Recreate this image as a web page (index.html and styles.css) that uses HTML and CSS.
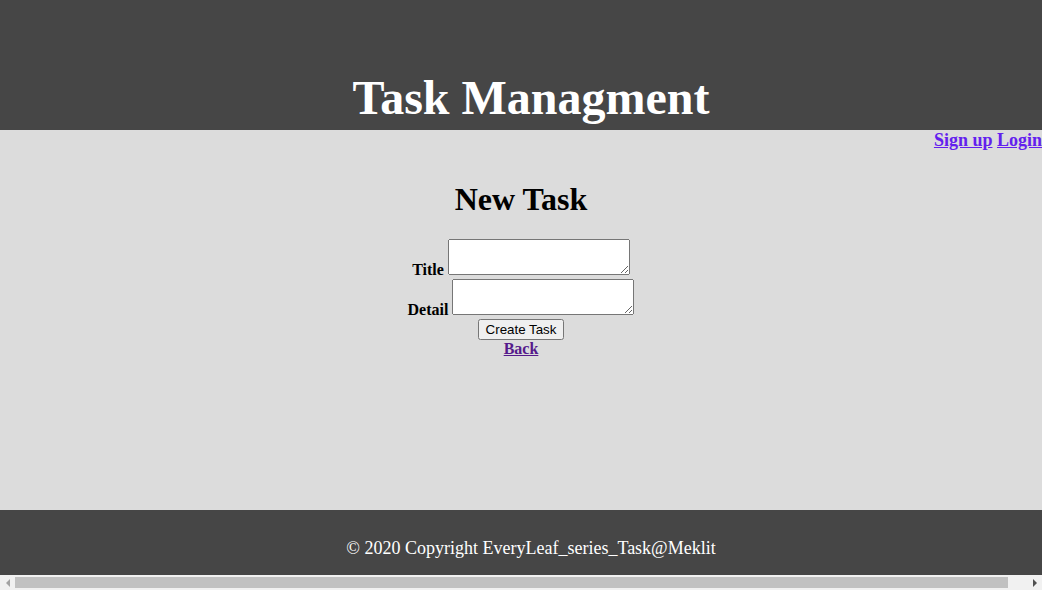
FILE: index.html
```html
<!DOCTYPE html>
<html lang="en">
<head>
<meta charset="utf-8">
<title>Task Managment</title>
<link rel="stylesheet" href="styles.css">
</head>
<body>
<header class="site-header">
  <h1 class="site-title">Task Managment</h1>
</header>
<main class="content">
  <nav class="auth-links"><a href="#" class="auth-link">Sign up</a> <a href="#" class="auth-link">Login</a></nav>
  <h2 class="page-title">New Task</h2>
  <form class="task-form">
    <div class="field"><label class="field-label">Title</label> <textarea class="field-input"></textarea></div>
    <div class="field"><label class="field-label">Detail</label> <textarea class="field-input"></textarea></div>
    <div class="actions"><input type="submit" value="Create Task" class="submit-btn"></div>
  </form>
  <a href="#" class="back-link">Back</a>
</main>
<footer class="site-footer">
  <p class="copyright">© 2020 Copyright EveryLeaf_series_Task@Meklit</p>
</footer>
<div class="hscroll" aria-hidden="true">
  <span class="hscroll-btn"><span class="arrow arrow-left"></span></span>
  <span class="hscroll-track"><span class="hscroll-thumb"></span></span>
  <span class="hscroll-btn"><span class="arrow arrow-right"></span></span>
</div>
</body>
</html>
```

FILE: styles.css
```css
html, body {
  margin: 0;
  padding: 0;
}
body {
  font-family: "Liberation Serif", "Times New Roman", serif;
  font-size: 16px;
  background: #dcdcdc;
}
.site-header {
  width: 100%;
  height: 60px;
  padding: 70px 10px 0;
  background: #464646;
  text-align: center;
}
.site-title {
  margin: 0;
  font-size: 48px;
  font-weight: bold;
  color: #ffffff;
}
.content {
  height: 380px;
  background: #dcdcdc;
  text-align: center;
}
.auth-links {
  text-align: right;
  font-size: 18px;
  font-weight: bold;
}
.auth-link {
  color: #6320ee;
}
.page-title {
  margin: 30px 0 21px;
  font-size: 32px;
  font-weight: bold;
}
.task-form {
  margin: 0;
}
.field-label {
  font-weight: bold;
}
.back-link {
  font-weight: bold;
  color: #551a8b;
}
.site-footer {
  width: 100%;
  height: 37px;
  padding: 28px 10px 0;
  background: #464646;
  text-align: center;
}
.copyright {
  margin: 0;
  font-size: 18px;
  color: #ffffff;
}

/* horizontal scrollbar overlay (page is wider than the window) */
.hscroll {
  position: fixed;
  left: 0;
  right: 0;
  bottom: 0;
  height: 15px;
  display: flex;
  background: #f1f1f1;
}
.hscroll-btn {
  width: 15px;
  display: flex;
  align-items: center;
  justify-content: center;
}
.hscroll-track {
  flex: 1;
  padding: 2px 0;
  box-sizing: border-box;
}
.hscroll-thumb {
  display: block;
  width: 993px;
  height: 100%;
  background: #c1c1c1;
}
.arrow {
  width: 0;
  height: 0;
  border-top: 4px solid transparent;
  border-bottom: 4px solid transparent;
}
.arrow-left {
  border-right: 4px solid #a3a3a3;
}
.arrow-right {
  border-left: 4px solid #505050;
}
```
